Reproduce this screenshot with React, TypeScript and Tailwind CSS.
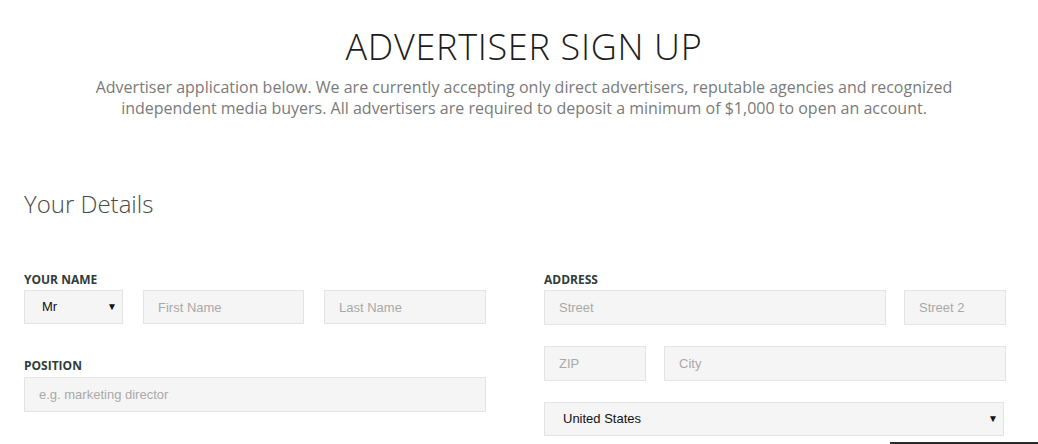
import React from "react";

const inputCls =
  "h-[34px] bg-[#f5f5f5] border border-[#e4e4e4] px-[14px] text-[13px] text-[#222] placeholder:text-[#a9a9a9] outline-none";

function Select({ value, w, pl }: { value: string; w: string; pl: string }) {
  return (
    <div className={`relative ${w}`}>
      <div
        className={`h-[34px] w-full bg-[#f5f5f5] border border-[#e4e4e4] ${pl} flex items-center text-[13px] text-[#111]`}
      >
        {value}
      </div>
      <span className="absolute right-[6px] top-[10px] text-[10px] leading-[14px] text-[#111]">
        ▼
      </span>
    </div>
  );
}

export default function App() {
  return (
    <div
      className="w-[1038px] h-[444px] overflow-hidden bg-white"
      style={{ fontFamily: "'Open Sans', 'Liberation Sans', sans-serif" }}
    >
      <div className="pt-[25px] pl-[10px] text-center">
        <h1 className="text-[36px] leading-[44px] font-light text-[#1c1c1c] tracking-[0.7px]">
          ADVERTISER SIGN UP
        </h1>
        <p className="mt-[8px] text-[16px] leading-[21px] text-[#7a7a7a]">
          Advertiser application below. We are currently accepting only direct advertisers, reputable agencies and recognized
          <br />
          independent media buyers. All advertisers are required to deposit a minimum of $1,000 to open an account.
        </p>
      </div>

      <div className="pl-[24px]">
        <h2 className="mt-[69px] text-[24px] leading-[32px] font-light text-[#4a4a4a]">Your Details</h2>

        <div className="mt-[52px] grid grid-cols-[462px_462px] gap-x-[58px]">
          <div className="flex flex-col">
            <label className="block text-[12px] leading-[16px] font-bold text-[#2f3c3c] mb-[2px]">YOUR NAME</label>
            <div className="flex gap-[20px]" style={{ fontFamily: "'Liberation Sans', Arial, sans-serif" }}>
              <Select value="Mr" w="w-[99px]" pl="pl-[17px]" />
              <input className={`${inputCls} w-[161px]`} placeholder="First Name" />
              <input className={`${inputCls} w-[162px]`} placeholder="Last Name" />
            </div>

            <label className="block mt-[34px] text-[12px] leading-[16px] font-bold text-[#2f3c3c] mb-[3px]">POSITION</label>
            <input
              className={`${inputCls} w-[462px] h-[35px]`}
              style={{ fontFamily: "'Liberation Sans', Arial, sans-serif" }}
              placeholder="e.g. marketing director"
            />
          </div>

          <div className="flex flex-col">
            <label className="block text-[12px] leading-[16px] font-bold text-[#2f3c3c] mb-[2px]">ADDRESS</label>
            <div className="flex flex-col gap-[21px]" style={{ fontFamily: "'Liberation Sans', Arial, sans-serif" }}>
              <div className="flex gap-[18px]">
                <input className={`${inputCls} w-[342px] h-[35px]`} placeholder="Street" />
                <input className={`${inputCls} w-[102px] h-[35px]`} placeholder="Street 2" />
              </div>
              <div className="flex gap-[18px]">
                <input className={`${inputCls} w-[102px] h-[35px]`} placeholder="ZIP" />
                <input className={`${inputCls} w-[342px] h-[35px]`} placeholder="City" />
              </div>
              <Select value="United States" w="w-[460px]" pl="pl-[18px]" />
            </div>
            <div className="mt-[6px] ml-[346px] w-[200px] h-[20px] bg-[#2b2b2b]" />
          </div>
        </div>
      </div>
    </div>
  );
}
